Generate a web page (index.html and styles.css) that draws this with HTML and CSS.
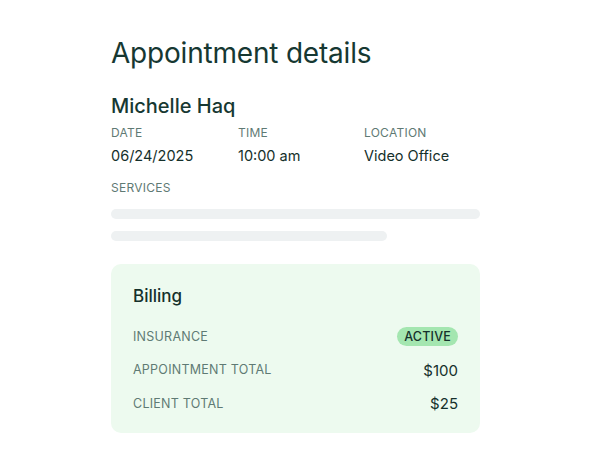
FILE: index.html
```html
<!DOCTYPE html>
<html>
<head>
<meta charset="utf-8">
<link rel="stylesheet" href="styles.css">
</head>
<body>
<main class="details">
  <h1 class="title">Appointment details</h1>
  <h2 class="client">Michelle Haq</h2>
  <div class="meta">
    <div class="field">
      <div class="label">Date</div>
      <div class="value">06/24/2025</div>
    </div>
    <div class="field">
      <div class="label">Time</div>
      <div class="value">10:00 am</div>
    </div>
    <div class="field">
      <div class="label">Location</div>
      <div class="value">Video Office</div>
    </div>
  </div>
  <div class="label services-label">Services</div>
  <div class="skeleton">
    <div class="bar bar-full"></div>
    <div class="bar bar-short"></div>
  </div>
  <section class="billing">
    <h3 class="billing-title">Billing</h3>
    <div class="row">
      <span class="label">Insurance</span>
      <span class="badge">ACTIVE</span>
    </div>
    <div class="row">
      <span class="label">Appointment total</span>
      <span class="amount">$100</span>
    </div>
    <div class="row">
      <span class="label">Client total</span>
      <span class="amount">$25</span>
    </div>
  </section>
</main>
</body>
</html>
```
FILE: styles.css
```css
* { box-sizing: border-box; }
html, body { margin: 0; padding: 0; background: #ffffff; }
body {
  font-family: Inter, "Liberation Sans", sans-serif;
  color: #15302b;
}
.details {
  width: 369px;
  margin-left: 111px;
  padding-top: 36px;
}
.title {
  margin: 0;
  font-size: 28px;
  font-weight: 400;
  line-height: 34px;
  letter-spacing: -0.2px;
  color: #163832;
}
.client {
  margin: 24px 0 0 0;
  font-size: 20px;
  font-weight: 500;
  line-height: 24px;
  color: #163832;
}
.meta {
  display: grid;
  grid-template-columns: 127px 126px 1fr;
  margin-top: 7px;
}
.label {
  font-size: 12px;
  line-height: 16px;
  text-transform: uppercase;
  color: #5f7a74;
  letter-spacing: 0.25px;
}
.value {
  margin-top: 6px;
  font-size: 14.5px;
  line-height: 18px;
  color: #15302b;
}
.services-label { margin-top: 15px; }
.skeleton {
  display: flex;
  flex-direction: column;
  gap: 12px;
  margin-top: 13px;
}
.bar {
  height: 10px;
  border-radius: 5px;
  background: #eef1f2;
}
.bar-full { width: 369px; }
.bar-short { width: 276px; }
.billing {
  margin-top: 23px;
  background: #edfaef;
  border-radius: 10px;
  padding: 22px 22px 12px 22px;
}
.billing-title {
  margin: 0 0 14px 0;
  font-size: 17px;
  font-weight: 500;
  line-height: 20px;
  color: #15302b;
}
.row {
  display: flex;
  justify-content: space-between;
  align-items: center;
  height: 33.5px;
}
.row .label { font-size: 12.5px; }
.amount {
  font-size: 15px;
  color: #15302b;
}
.badge {
  background: #a4e6b0;
  color: #15302b;
  font-size: 12.5px;
  font-weight: 500;
  line-height: 19px;
  padding: 0 7px;
  border-radius: 10px;
  letter-spacing: 0.2px;
}
```
